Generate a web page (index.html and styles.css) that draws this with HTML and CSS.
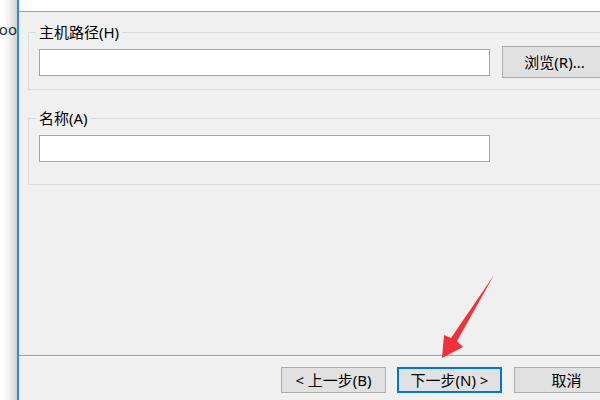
FILE: index.html
```html
<!DOCTYPE html>
<html lang="zh-CN">
<head>
<meta charset="utf-8">
<link rel="stylesheet" href="styles.css">
</head>
<body>
<div class="desktop">
  <div class="bgwin"><span class="bgtext">Foo</span></div>
  <div class="dialog">
    <div class="header"></div>
    <div class="content">
      <fieldset class="group g1">
        <legend>主机路径(H)</legend>
        <div class="row">
          <div class="input"></div>
          <button class="btn browse">浏览(R)...</button>
        </div>
      </fieldset>
      <fieldset class="group g2">
        <legend>名称(A)</legend>
        <div class="input"></div>
      </fieldset>
    </div>
    <div class="footer">
      <button class="btn">&lt; 上一步(B)</button>
      <button class="btn default">下一步(N) &gt;</button>
      <button class="btn cancel">取消</button>
    </div>
  </div>
</div>
<svg class="arrow" width="600" height="400" viewBox="0 0 600 400">
  <polygon points="494,275 457,341 463,347 442,358 444,335 451,338" fill="#f2303a"/>
</svg>
</body>
</html>
```
FILE: styles.css
```css
html, body {
  margin: 0;
  padding: 0;
  width: 600px;
  height: 400px;
  overflow: hidden;
  background: #fff;
  font-family: "Noto Sans", "Noto Sans CJK SC", sans-serif;
  font-size: 15px;
  color: #000;
}
.desktop {
  display: flex;
  width: 600px;
  height: 400px;
}
.bgwin {
  width: 17px;
  flex: none;
  overflow: hidden;
  display: flex;
  justify-content: flex-end;
  align-items: flex-start;
  background: linear-gradient(to right, #fff 0, #fff 4px, #e6e6e6 12px, #cfcfcf 17px);
}
.bgtext {
  white-space: nowrap;
  margin-top: 21px;
  font-size: 15px;
  line-height: 16px;
  color: #1b2a3a;
}
.dialog {
  flex: none;
  width: 650px;
  border-left: 2px solid #2b8de8;
  background: #f0f0f0;
  display: flex;
  flex-direction: column;
}
.header {
  height: 11px;
  background: #fff;
  border-bottom: 1px solid #a0a0a0;
}
.content {
  padding-left: 9px;
}
.group {
  margin: 0;
  width: 620px;
  box-sizing: border-box;
  border: 1px solid #dcdcdc;
  padding: 0 0 0 10px;
  min-inline-size: 0;
}
.group legend {
  padding: 0 3px;
  margin-left: -3px;
  line-height: 16px;
  font-size: 15px;
}
.g1 {
  margin-top: 12px;
  padding-bottom: 11px;
}
.g2 {
  margin-top: 20px;
  padding-bottom: 22px;
}
.row {
  display: flex;
  align-items: center;
  gap: 12px;
  margin-top: 6px;
}
.input {
  width: 451px;
  height: 27px;
  box-sizing: border-box;
  background: #fff;
  border: 1px solid #a5a5a5;
}
.g2 .input {
  margin-top: 9px;
}
.btn {
  font-family: "Noto Sans", "Noto Sans CJK SC", sans-serif;
  font-size: 15px;
  color: #000;
  background: #e1e1e1;
  border: 1px solid #adadad;
  width: 105px;
  height: 26px;
  padding: 0;
  line-height: 24px;
  box-sizing: border-box;
  flex: none;
}
.browse {
  height: 32px;
  line-height: 30px;
}
.footer {
  margin-top: auto;
  border-top: 1px solid #a0a0a0;
  box-shadow: inset 0 1px 0 #f7f7f7;
  padding: 11px 0 7px 262px;
  display: flex;
  gap: 11px;
}
.btn.default {
  border-color: #0078d7;
  box-shadow: inset 0 0 0 1px #0078d7;
}
.btn.cancel {
  margin-left: 1px;
}
.arrow {
  position: absolute;
  left: 0;
  top: 0;
  pointer-events: none;
}
```
